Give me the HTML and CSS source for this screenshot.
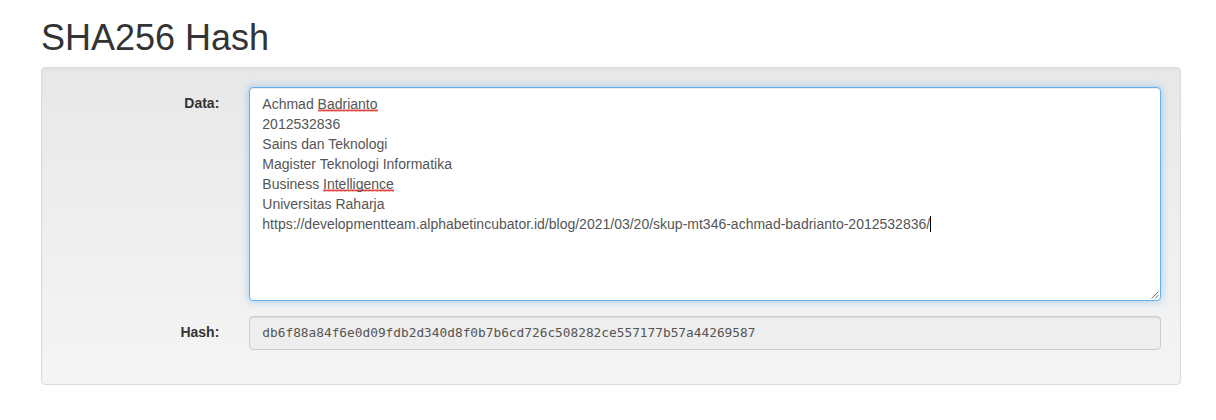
FILE: index.html
```html
<!DOCTYPE html>
<html>
<head>
<meta charset="utf-8">
<link rel="stylesheet" href="styles.css">
</head>
<body>
<div class="container">
  <h1 class="title">SHA256 Hash</h1>
  <div class="well">
    <div class="form-group">
      <label class="label">Data:</label>
      <div class="field">
        <div class="textarea">Achmad <span class="sp">Badrianto</span>
2012532836
Sains dan Teknologi
Magister Teknologi Informatika
Business <span class="sp">Intelligence</span>
Universitas Raharja
https://developmentteam.alphabetincubator.id/blog/2021/03/20/skup-mt346-achmad-badrianto-2012532836/<span class="caret"></span><svg class="grip" width="9" height="9" viewBox="0 0 9 9"><path d="M8.5 1.5L1.5 8.5M8.5 5L5 8.5" stroke="#777" stroke-width="1" fill="none"/></svg></div>
      </div>
    </div>
    <div class="form-group">
      <label class="label">Hash:</label>
      <div class="field">
        <div class="input">db6f88a84f6e0d09fdb2d340d8f0b7b6cd726c508282ce557177b57a44269587</div>
      </div>
    </div>
  </div>
</div>
</body>
</html>
```
FILE: styles.css
```css
* { box-sizing: border-box; }
html, body { margin: 0; padding: 0; background: #fff; }
body {
  font-family: "Liberation Sans", Arial, sans-serif;
  font-size: 14px;
  line-height: 1.42857;
  color: #333;
}
.container {
  margin-left: 41px;
  width: 1140px;
}
.title {
  font-family: "Liberation Sans", Arial, sans-serif;
  font-size: 36px;
  font-weight: 500;
  line-height: 40px;
  margin: 18px 0 9px;
  color: #333;
}
.well {
  min-height: 20px;
  padding: 19px;
  border: 1px solid #dcdcdc;
  border-radius: 4px;
  background-color: #f5f5f5;
  background-image: linear-gradient(to bottom, #e8e8e8 0, #f5f5f5 100%);
  box-shadow: inset 0 1px 3px rgba(0,0,0,.05), 0 1px 0 rgba(255,255,255,.1);
}
.form-group {
  display: flex;
  margin: 0 -15px 15px;
}
.label {
  flex: 0 0 188.33px;
  padding: 7px 15px 0;
  text-align: right;
  font-weight: bold;
}
.field {
  flex: 1;
  padding: 0 15px;
}
.textarea {
  position: relative;
  height: 214px;
  padding: 6px 12px;
  border: 1px solid #66afe9;
  border-radius: 4px;
  background: #fff;
  color: #555;
  white-space: pre;
  line-height: 20px;
  box-shadow: inset 0 1px 1px rgba(0,0,0,.075), 0 0 8px rgba(102,175,233,.6);
}
.sp {
  background-image: url("data:image/svg+xml,%3Csvg xmlns='http://www.w3.org/2000/svg' width='4' height='3'%3E%3Cpath d='M0 2.5L1 0.5L2 2.5L3 0.5L4 2.5' stroke='%23e0302a' stroke-width='0.9' fill='none'/%3E%3C/svg%3E");
  background-size: 4px 3px;
  background-repeat: repeat-x;
  background-position: 0 100%;
}
.caret {
  display: inline-block;
  width: 1px;
  height: 16px;
  background: #000;
  vertical-align: -3px;
}
.grip {
  position: absolute;
  right: 1px;
  bottom: 1px;
}
.input {
  height: 34px;
  padding: 7px 12px;
  border: 1px solid #ccc;
  border-radius: 4px;
  background: #eee;
  color: #555;
  font-family: "DejaVu Sans Mono", monospace;
  font-size: 12.8px;
  line-height: 18px;
  box-shadow: inset 0 1px 1px rgba(0,0,0,.075);
}
```
